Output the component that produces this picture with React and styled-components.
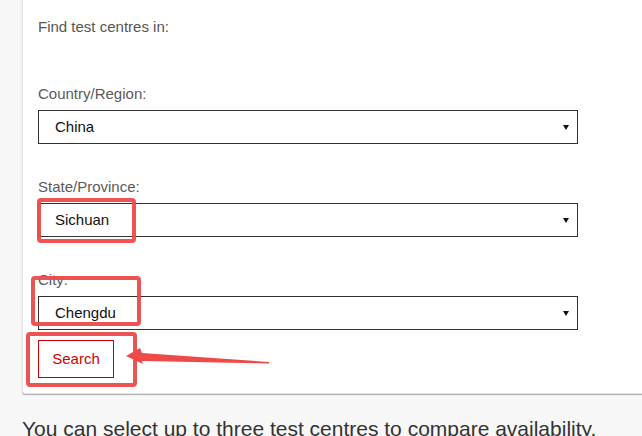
import React from "react";
import styled, { createGlobalStyle } from "styled-components";

const Global = createGlobalStyle`
  html, body { margin: 0; padding: 0; background: #f7f7f7; }
  body { font-family: "Liberation Sans", Arial, sans-serif; overflow: hidden; }
`;

const Page = styled.div`
  position: relative;
  width: 642px;
  height: 436px;
  overflow: hidden;
`;

const Card = styled.section`
  margin: -20px -20px 0 22px;
  padding: 37px 15px 15px 15px;
  background: #fff;
  border: 1px solid #e2e2e2;
  border-radius: 3px;
  box-shadow: 0 1px 1px rgba(0, 0, 0, 0.3);
`;

const Intro = styled.p`
  margin: 0 0 49px;
  font-size: 15px;
  line-height: 18px;
  color: #555;
`;

const Field = styled.div`
  display: flex;
  flex-direction: column;
  gap: 7px;
  margin-bottom: ${(p) => (p.$last ? "10px" : "34px")};
`;

const Label = styled.label`
  font-size: 15px;
  line-height: 18px;
  color: #5a5a5a;
`;

const Dropdown = styled.div`
  box-sizing: border-box;
  width: 540px;
  height: 34px;
  display: flex;
  align-items: center;
  justify-content: space-between;
  padding: 0 8px 0 16px;
  border: 1px solid #333;
  background: #fff;
  font-size: 15px;
  line-height: 18px;
  color: #111;
`;

const Caret = styled.svg`
  width: 6px;
  height: 5px;
  display: block;
`;

const SearchButton = styled.button`
  box-sizing: border-box;
  width: 76px;
  height: 38px;
  padding: 0;
  border: 1px solid #cc0000;
  background: #fff;
  color: #d40000;
  font-family: "Liberation Sans", Arial, sans-serif;
  font-size: 15px;
  line-height: 18px;
  border-radius: 0;
`;

const Note = styled.p`
  margin: 23px 0 0 22px;
  font-size: 21px;
  line-height: 24px;
  color: #333;
  white-space: nowrap;
`;

const Overlay = styled.svg`
  position: absolute;
  left: 0;
  top: 0;
  width: 642px;
  height: 436px;
  pointer-events: none;
`;

function Select({ value }) {
  return (
    <Dropdown>
      <span>{value}</span>
      <Caret viewBox="0 0 6 5">
        <polygon points="0,0 6,0 3,5" fill="#111" />
      </Caret>
    </Dropdown>
  );
}

export default function App() {
  const red = "#ee4a4a";
  return (
    <Page>
      <Global />
      <Card>
        <Intro>Find test centres in:</Intro>
        <Field>
          <Label>Country/Region:</Label>
          <Select value="China" />
        </Field>
        <Field>
          <Label>State/Province:</Label>
          <Select value="Sichuan" />
        </Field>
        <Field $last>
          <Label>City:</Label>
          <Select value="Chengdu" />
        </Field>
        <SearchButton>Search</SearchButton>
      </Card>
      <Note>You can select up to three test centres to compare availability.</Note>
      <Overlay viewBox="0 0 642 436">
        <g fill="none" stroke={red} strokeWidth="4" opacity="0.95">
          <rect x="39" y="200" width="95" height="41" rx="2" />
          <rect x="33" y="278" width="106" height="46" rx="2" />
          <rect x="28" y="334" width="107" height="51" rx="2" />
        </g>
        <polygon
          points="126,356 140,348 142,353 269,362 269,363.5 142,361 143,364"
          fill={red}
        />
      </Overlay>
    </Page>
  );
}
